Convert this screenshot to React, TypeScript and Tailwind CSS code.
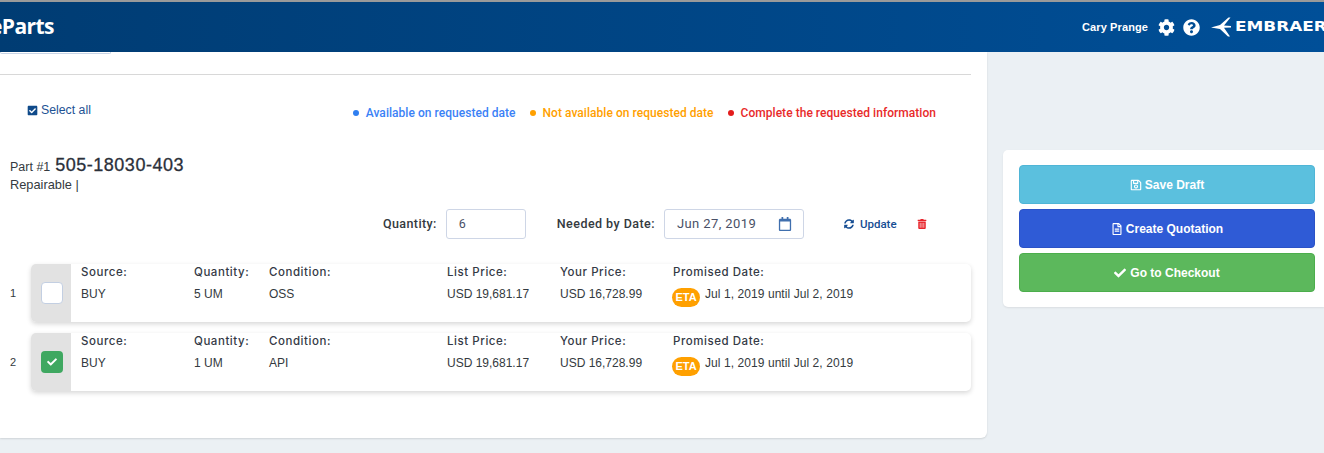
import { FaCheck, FaCheckSquare, FaCog, FaQuestionCircle, FaRegCalendar, FaRegFileAlt, FaRegSave, FaSyncAlt, FaTrashAlt } from "react-icons/fa";
import type { ReactNode } from "react";

const legend = [
  { label: "Available on requested date", dot: "bg-[#2f7ff0]", text: "text-[#3b82f6]" },
  { label: "Not available on requested date", dot: "bg-[#ffa000]", text: "text-[#ffa000]" },
  { label: "Complete the requested information", dot: "bg-[#e31c1c]", text: "text-[#e82a2a]" },
];

const rows = [
  { n: 1, qty: "5 UM", condition: "OSS", checked: false },
  { n: 2, qty: "1 UM", condition: "API", checked: true },
];

function Cell({ label, width, children }: { label: string; width: string; children: ReactNode }) {
  return (
    <div className={`${width} shrink-0`}>
      <div className="h-[17px] font-['Inter',sans-serif] text-[11.5px] font-medium leading-[17px] tracking-[0.55px] text-[#343a46]">{label}</div>
      <div className="mt-[5px] text-[12px] leading-[17px] text-[#343a40]">{children}</div>
    </div>
  );
}

function PartRow({ n, qty, condition, checked }: { n: number; qty: string; condition: string; checked: boolean }) {
  return (
    <div className="flex items-center">
      <div className="w-[31px] shrink-0 pl-[10px] text-[11px] text-[#343a40]">{n}</div>
      <div className="flex h-[58px] w-[940px] overflow-hidden rounded-[5px] bg-white shadow-[0_2px_5px_rgba(0,0,0,0.16)]">
        <div className="flex w-[40px] shrink-0 items-center justify-center bg-[#e2e2e2] pl-[2px]">
          {checked ? (
            <div className="flex h-[22px] w-[22px] items-center justify-center rounded-[4px] bg-[#3fa861] text-white">
              <FaCheck size={10} />
            </div>
          ) : (
            <div className="h-[22px] w-[22px] rounded-[4px] border border-[#c3cfe2] bg-white" />
          )}
        </div>
        <div className="flex pl-[10px]">
          <Cell label="Source:" width="w-[113px]">BUY</Cell>
          <Cell label="Quantity:" width="w-[75px]">{qty}</Cell>
          <Cell label="Condition:" width="w-[178px]">{condition}</Cell>
          <Cell label="List Price:" width="w-[113px]">USD 19,681.17</Cell>
          <Cell label="Your Price:" width="w-[113px]">USD 16,728.99</Cell>
          <Cell label="Promised Date:" width="w-[220px]">
            <span className="ml-[-1px] inline-flex items-start gap-[5px]">
              <span className="mt-[2px] flex h-[19px] w-[28px] items-center justify-center rounded-[10px] bg-[#ffa000] text-[11px] font-bold text-white">ETA</span>
              <span className="tracking-[0.07px]">Jul 1, 2019 until Jul 2, 2019</span>
            </span>
          </Cell>
        </div>
      </div>
    </div>
  );
}

function ActionButton({ color, icon, children }: { color: string; icon: ReactNode; children: ReactNode }) {
  return (
    <button className={`flex h-[39px] w-[296px] items-center justify-center gap-[3px] rounded-[4px] border pt-[1px] text-[12px] font-bold text-white ${color}`}>
      {icon}
      {children}
    </button>
  );
}

export default function App() {
  return (
    <div className="h-[453px] w-[1324px] overflow-hidden bg-[#ebf0f4] font-['Liberation_Sans',Arial,sans-serif]">
      <div className="h-[2px] bg-[#9a9a9a]" />
      <header className="flex h-[50px] items-center justify-between bg-gradient-to-r from-[#003c73] to-[#004f98] text-white">
        <div className="ml-[-10px] font-['Open_Sans',sans-serif] text-[21px] font-bold tracking-[-0.6px]">eParts</div>
        <div className="flex items-center">
          <span className="text-[11px] font-bold tracking-[0.1px]">Cary Prange</span>
          <FaCog size={17} className="ml-[10px]" />
          <FaQuestionCircle size={17} className="ml-[8px]" />
          <svg viewBox="0 0 20 20" className="ml-[11px] h-[20px] w-[20px] fill-white">
            <path d="M0 10.5 L9 8 L17.5 0.5 L19.5 0.5 L13 8.5 L20 9 L20 10.5 L13 10.8 L19 19.5 L17 19.5 L9 12 Z" />
          </svg>
          <span className="mr-[-1px] ml-[4px] w-[90px] origin-left scale-x-[1.25] font-['DejaVu_Sans',sans-serif] text-[13.5px] font-bold leading-none whitespace-nowrap">EMBRAER</span>
        </div>
      </header>

      <div className="flex items-start">
        <main className="h-[386px] w-[987px] shrink-0 rounded-br-[6px] bg-white shadow-[0_1px_2px_rgba(0,0,0,0.12)]">
          <div className="h-[2px] w-[111px] rounded-b-[3px] border-x border-b border-[#c8d4e6]" />
          <div className="ml-0 mt-[20px] h-px w-[971px] bg-[#d8d8d8]" />

          <div className="flex h-[43px] items-start justify-between pt-[26px]">
            <div className="ml-[28px] flex items-center gap-[2px] text-[12.3px] text-[#1d5294]">
              <FaCheckSquare size={11} className="ml-[-1px] text-[#0f4a8a]" />
              <span className="ml-[1px]">Select all</span>
            </div>
            <div className="mr-[51px] mt-[3px] flex gap-[14px] font-['Roboto',sans-serif] text-[12px] font-medium tracking-[0.04px]">
              {legend.map((item) => (
                <div key={item.label} className={`flex items-center gap-[7px] ${item.text}`}>
                  <span className={`h-[6px] w-[6px] rounded-full ${item.dot}`} />
                  {item.label}
                </div>
              ))}
            </div>
          </div>

          <div className="ml-[10px] mt-[34px] text-[#343a40]">
            <div className="flex h-[21px] items-baseline gap-[5px] text-[12.5px]">
              Part #1 <span className="text-[18px] tracking-[0.5px] text-[#2b303a] [-webkit-text-stroke:0.3px_#2b303a]">505-18030-403</span>
            </div>
            <div className="mt-[4px] text-[12.8px] leading-[16px]">Repairable |</div>
          </div>

          <div className="mt-[16px] flex h-[30px] items-center font-['Roboto',sans-serif] text-[12.5px]">
            <span className="ml-[383px] mt-px font-medium tracking-[0.4px] text-[#343a40]">Quantity:</span>
            <div className="ml-[9px] flex h-[30px] w-[80px] items-center rounded-[3px] border border-[#ced6e6] pl-[12px] text-[#495066]">6</div>
            <span className="ml-[31px] mt-px font-medium tracking-[0.45px] text-[#343a40]">Needed by Date:</span>
            <div className="ml-[9px] flex h-[30px] w-[140px] items-center justify-between rounded-[3px] border border-[#ced6e6] pl-[12px] pr-[11px] text-[13px] tracking-[0.4px] text-[#495066]">
              Jun 27, 2019
              <FaRegCalendar size={14} className="text-[#3f6fae]" />
            </div>
            <FaSyncAlt size={10} className="ml-[40px] text-[#154d93]" />
            <span className="ml-[6px] mt-px text-[11.5px] font-medium text-[#154d93]">Update</span>
            <FaTrashAlt size={10} className="ml-[20px] text-[#e8232a]" />
          </div>

          <div className="mt-[25px] flex flex-col gap-[11px]">
            {rows.map((row) => (
              <PartRow key={row.n} {...row} />
            ))}
          </div>
        </main>

        <aside className="ml-[16px] mt-[98px] flex h-[157px] flex-1 flex-col gap-[5px] rounded-l-[5px] bg-white pl-[16px] pt-[15px] shadow-[0_1px_2px_rgba(0,0,0,0.08)]">
          <ActionButton color="border-[#4fb5d6] bg-[#5bc0de]" icon={<FaRegSave size={12} />}>Save Draft</ActionButton>
          <ActionButton color="border-[#2b52c7] bg-[#2f5bd6]" icon={<FaRegFileAlt size={12} />}>Create Quotation</ActionButton>
          <ActionButton color="border-[#4cae4c] bg-[#5cb85c]" icon={<FaCheck size={12} className="mr-[1px]" />}>Go to Checkout</ActionButton>
        </aside>
      </div>
    </div>
  );
}
